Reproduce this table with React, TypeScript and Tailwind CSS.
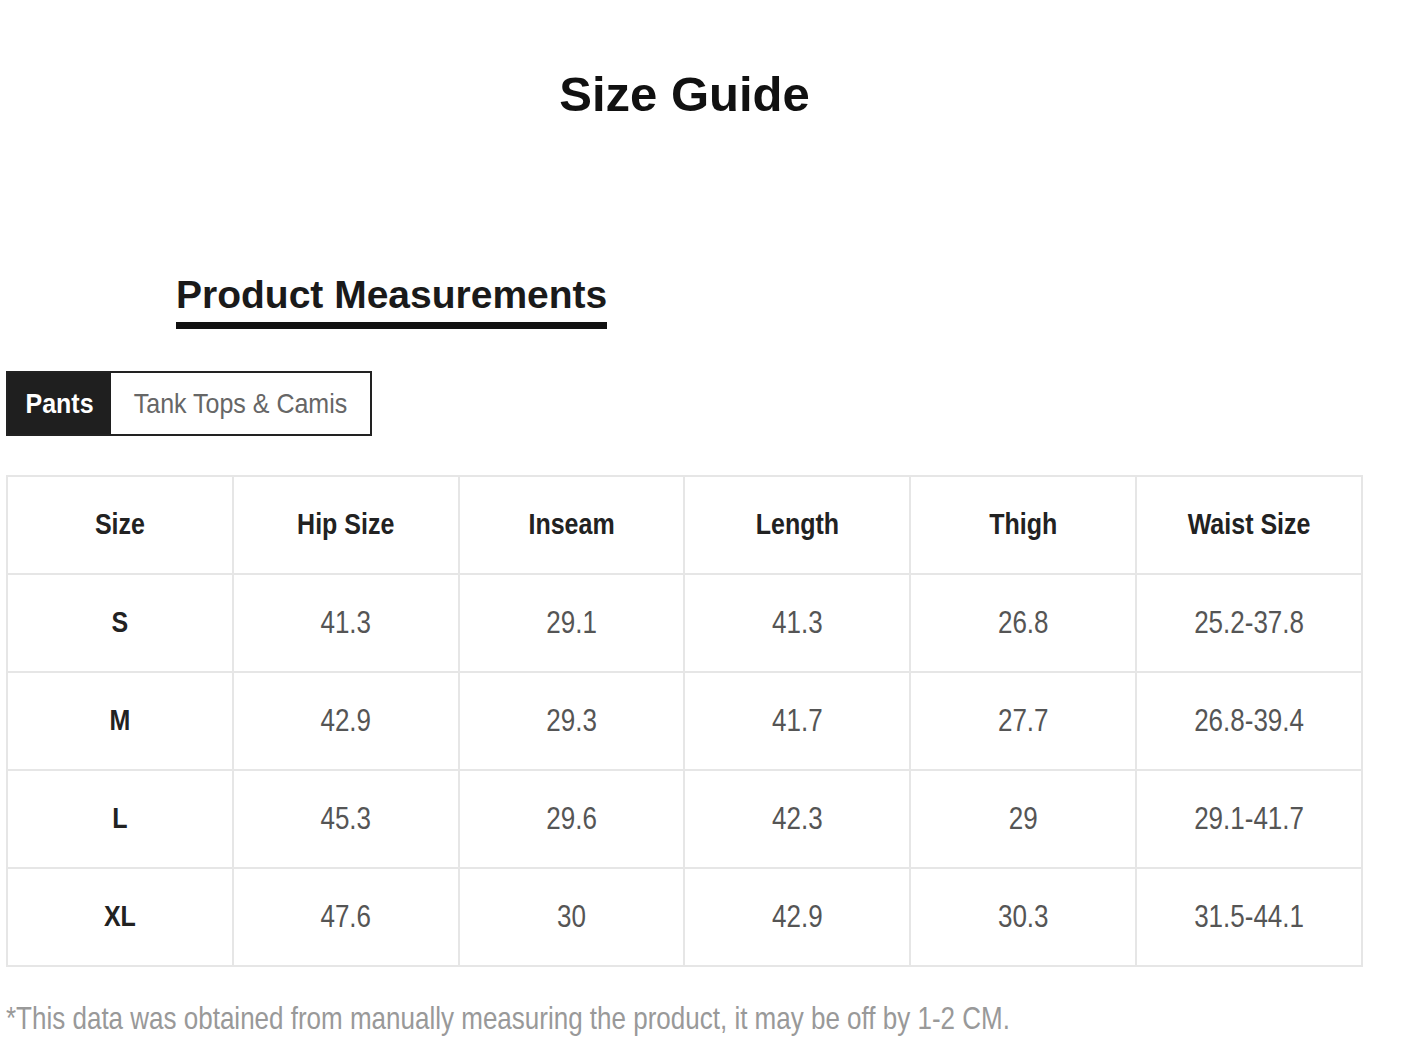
const HEADERS = ["Size", "Hip Size", "Inseam", "Length", "Thigh", "Waist Size"];

const ROWS = [
  ["S", "41.3", "29.1", "41.3", "26.8", "25.2-37.8"],
  ["M", "42.9", "29.3", "41.7", "27.7", "26.8-39.4"],
  ["L", "45.3", "29.6", "42.3", "29", "29.1-41.7"],
  ["XL", "47.6", "30", "42.9", "30.3", "31.5-44.1"],
];

export default function App() {
  return (
    <div className="w-[1423px] h-[1042px] bg-white pl-[6px] font-['Liberation_Sans',Arial,sans-serif] overflow-hidden">
      <div className="w-[1357px]">
        {/* Titel */}
        <h1 className="mt-[70px] h-[48px] text-center text-[49px] leading-none font-bold text-[#111]">
          Size Guide
        </h1>

        <div className="mt-[157px] ml-[170px]">
          <h2 className="inline-block pb-[8px] border-b-[7px] border-[#111] text-[39px] leading-none font-bold text-[#1a1a1a]">
            Product Measurements
          </h2>
        </div>

        {/* Tabs */}
        <div className="mt-[42px] inline-flex h-[65px] border-2 border-[#222]">
          <div className="w-[103px] bg-[#1f1f1f] flex items-center justify-center">
            <span className="inline-block scale-y-[1.12] text-[25px] font-bold text-white leading-none">
              Pants
            </span>
          </div>
          <div className="w-[259px] bg-white flex items-center justify-center">
            <span className="inline-block scale-y-[1.12] text-[25px] text-[#666] leading-none">
              Tank Tops &amp; Camis
            </span>
          </div>
        </div>

        {/* Tabelle */}
        <table className="mt-[39px] w-[1357px] table-fixed border-collapse border-2 border-[#e6e6e6]">
          <thead>
            <tr className="h-[98px]">
              {HEADERS.map((h) => (
                <th key={h} className="border-2 border-[#e6e6e6] text-center align-middle">
                  <span className="inline-block scale-y-[1.2] text-[25px] font-bold text-[#222] leading-none">
                    {h}
                  </span>
                </th>
              ))}
            </tr>
          </thead>
          <tbody>
            {ROWS.map((row) => (
              <tr key={row[0]} className="h-[98px]">
                {row.map((v, i) => (
                  <td key={i} className="border-2 border-[#e6e6e6] text-center align-middle">
                    <span
                      className={
                        i === 0
                          ? "inline-block scale-y-[1.2] text-[25px] font-bold text-[#222] leading-none"
                          : "inline-block scale-y-[1.2] text-[26px] text-[#555] leading-none"
                      }
                    >
                      {v}
                    </span>
                  </td>
                ))}
              </tr>
            ))}
          </tbody>
        </table>

        <p className="mt-[38px]">
          <span className="inline-block origin-left scale-y-[1.18] text-[26px] text-[#999] leading-none">
            *This data was obtained from manually measuring the product, it may be off by 1-2 CM.
          </span>
        </p>
      </div>
    </div>
  );
}
